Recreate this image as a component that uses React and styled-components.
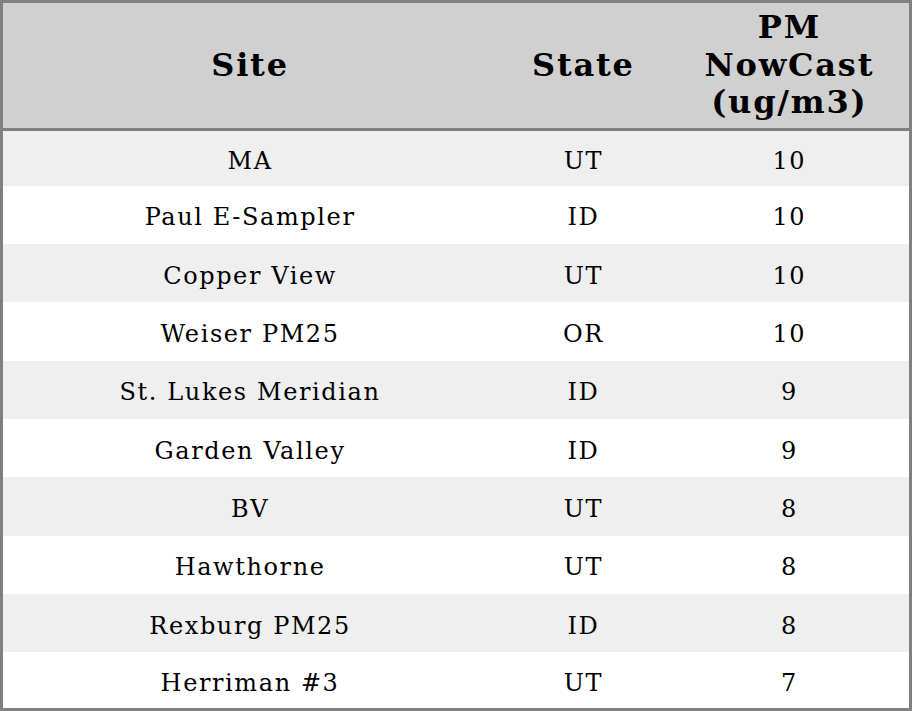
import React from "react";
import styled, { createGlobalStyle } from "styled-components";

const rows = [
  { site: "MA", state: "UT", pm: 10 },
  { site: "Paul E-Sampler", state: "ID", pm: 10 },
  { site: "Copper View", state: "UT", pm: 10 },
  { site: "Weiser PM25", state: "OR", pm: 10 },
  { site: "St. Lukes Meridian", state: "ID", pm: 9 },
  { site: "Garden Valley", state: "ID", pm: 9 },
  { site: "BV", state: "UT", pm: 8 },
  { site: "Hawthorne", state: "UT", pm: 8 },
  { site: "Rexburg PM25", state: "ID", pm: 8 },
  { site: "Herriman #3", state: "UT", pm: 7 },
];

function App() {
  return (
    <>
      <GlobalStyle />
      <Tabla>
        <colgroup>
          <col style={{ width: 494 }} />
          <col style={{ width: 172 }} />
          <col style={{ width: 240 }} />
        </colgroup>
        <thead>
          <tr>
            <Encabezado>Site</Encabezado>
            <Encabezado>State</Encabezado>
            <Encabezado>
              PM
              <br />
              NowCast
              <br />
              (ug/m3)
            </Encabezado>
          </tr>
        </thead>
        <tbody>
          {rows.map((row, index) => (
            <Fila key={index} $par={index % 2 === 0}>
              <Celda>{row.site}</Celda>
              <Celda>{row.state}</Celda>
              <Celda>{row.pm}</Celda>
            </Fila>
          ))}
        </tbody>
      </Tabla>
    </>
  );
}

export default App;

const GlobalStyle = createGlobalStyle`
  html, body {
    margin: 0;
    padding: 0;
    background: #ffffff;
  }
`;

const Tabla = styled.table`
  width: 912px;
  height: 711px;
  border: 3px solid #808080;
  border-collapse: collapse;
  table-layout: fixed;
  font-family: "DejaVu Serif", serif;
  color: #000000;
`;

const Encabezado = styled.th`
  height: 125px;
  padding: 0;
  background-color: #d0d0d0;
  border-bottom: 3px solid #808080;
  font-size: 32px;
  font-weight: bold;
  line-height: 37.5px;
  letter-spacing: 1.8px;
  text-align: center;
  vertical-align: middle;
`;

const Fila = styled.tr`
  height: 58px;
  background-color: ${(p) => (p.$par ? "#efefef" : "#ffffff")};

  &:first-child {
    height: 56px;
  }

  &:last-child {
    height: 57px;
  }
`;

const Celda = styled.td`
  padding: 5px 0 0 0;
  font-size: 24px;
  letter-spacing: 1.6px;
  text-align: center;
  vertical-align: middle;
`;
